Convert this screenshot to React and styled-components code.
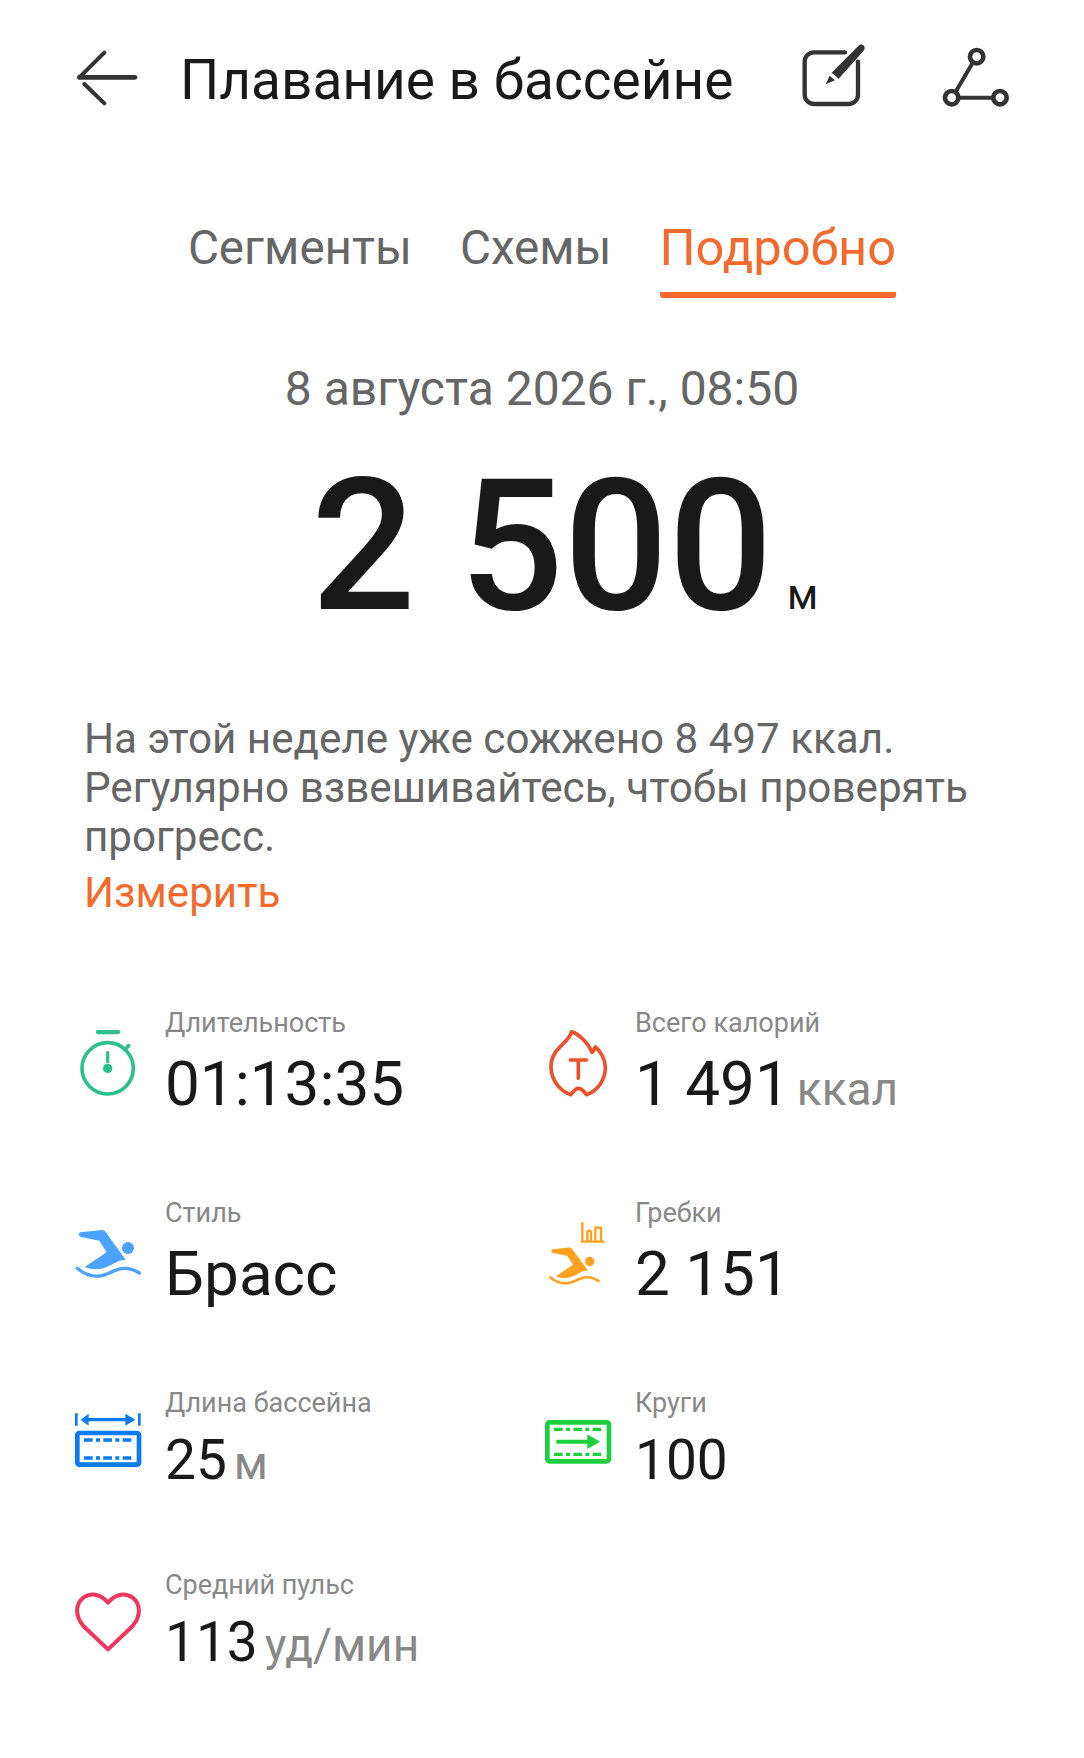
import React from 'react'
import styled, { createGlobalStyle } from 'styled-components'

const GlobalStyle = createGlobalStyle`
  html, body {
    margin: 0;
    padding: 0;
    background: #fff;
  }
`

function BackIcon() {
  return (
    <svg width="90" height="90" viewBox="0 -30 270 270">
      <path d="M28 112H195" stroke="#333" strokeWidth="14" strokeLinecap="round" />
      <path d="M28 112L103 38" fill="none" stroke="#333" strokeWidth="12" strokeLinecap="round" />
      <path d="M43 132L103 190" fill="none" stroke="#333" strokeWidth="12" strokeLinecap="round" />
    </svg>
  )
}

function EditIcon() {
  return (
    <svg width="90" height="90" viewBox="0 0 270 270">
      <path d="M165 67H72a28 28 0 0 0-28 28V194a28 28 0 0 0 28 28H176a28 28 0 0 0 28-28V95" fill="none" stroke="#333" strokeWidth="13" strokeLinecap="round" />
      <path d="M207 46C213 42 219 44 222 48C225 52 224 58 221 62L146 146L125 128Z" fill="#333" />
      <path d="M119 137L135 151L107 163Z" fill="#333" />
    </svg>
  )
}

function RouteIcon() {
  return (
    <svg width="90" height="90" viewBox="0 0 270 270">
      <g fill="none" stroke="#333">
        <circle cx="140" cy="80" r="20" strokeWidth="14" />
        <circle cx="65" cy="203" r="20" strokeWidth="14" />
        <circle cx="210" cy="203" r="20" strokeWidth="14" />
        <path d="M128 98L78 184M85 203H190" strokeWidth="12" />
      </g>
    </svg>
  )
}

function StopwatchIcon() {
  return (
    <svg width="72" height="72" viewBox="36 117 216 216">
      <path d="M114 123H174" stroke="#2cc08f" strokeWidth="13" strokeLinecap="round" />
      <circle cx="143" cy="232" r="77" fill="none" stroke="#2cc08f" strokeWidth="11" />
      <path d="M143 185V212" stroke="#2cc08f" strokeWidth="10" strokeLinecap="round" />
      <circle cx="143" cy="232" r="14" fill="#2cc08f" />
      <path d="M198 172L206 164" stroke="#2cc08f" strokeWidth="11" strokeLinecap="round" />
    </svg>
  )
}

function SwimShape({ color }) {
  return (
    <g fill={color}>
      <path d="M62 724L126 717Q133 717 137 723L197 806C175 806 160 820 140 828C115 838 95 836 74 828L140 784L118 749L64 738C54 736 54 726 62 724Z" />
      <circle cx="204" cy="771" r="18" />
      <path d="M52 832C85 860 120 860 150 845C180 830 205 825 238 846" fill="none" stroke={color} strokeWidth="10" strokeLinecap="round" />
    </g>
  )
}

function BlueSwimIcon() {
  return (
    <svg width="72" height="72" viewBox="36 687 216 216">
      <SwimShape color="#4ba3ff" />
    </svg>
  )
}

function OrangeSwimIcon() {
  return (
    <svg width="72" height="72" viewBox="36 57 216 216">
      <g transform="translate(20 -420) scale(.78)">
        <SwimShape color="#ffa01f" />
      </g>
      <path d="M157 64V122H224M172 122V92Q177 86 183 92V122M196 122V80H213V122" fill="none" stroke="#ffa01f" strokeWidth="7" />
    </svg>
  )
}

function PoolIcon() {
  return (
    <svg width="72" height="72" viewBox="36 87 216 216">
      <g stroke="#0a7bf0" fill="none">
        <path d="M49 97V134M238 97V134" strokeWidth="8" />
        <path d="M75 116H212" strokeWidth="10" />
        <rect x="52" y="156" width="185" height="95" rx="6" strokeWidth="14" />
        <path d="M72 177H217M72 231H217" strokeWidth="10" strokeDasharray="26 10 12 10" />
      </g>
      <path d="M62 116L86 98V134ZM226 116L196 98V134Z" fill="#0a7bf0" />
    </svg>
  )
}

function LapsIcon() {
  return (
    <svg width="72" height="72" viewBox="36 27 216 216">
      <g stroke="#1ccf3f" fill="none">
        <rect x="52" y="64" width="185" height="117" rx="7" strokeWidth="14" />
        <path d="M72 85H217M72 160H217" strokeWidth="10" strokeDasharray="26 10 12 10" />
        <path d="M84 122H180" strokeWidth="12" strokeLinecap="round" />
      </g>
      <path d="M172 100L210 122L172 144Z" fill="#1ccf3f" />
    </svg>
  )
}

function HeartIcon() {
  return (
    <svg width="72" height="72" viewBox="36 633 216 216">
      <path d="M144 665C120 637 90 635 70 650C45 670 45 705 70 735L144 805L218 735C243 705 243 670 218 650C198 635 168 637 144 665Z" fill="none" stroke="#f0365c" strokeWidth="12" strokeLinejoin="round" />
    </svg>
  )
}

function FlameIcon() {
  return (
    <svg width="72" height="72" viewBox="36 87 216 216">
      <path d="M125 92C122 108 104 124 88 140C70 158 62 178 63 200C64 232 84 268 122 281C130 272 136 262 146 262C156 262 162 272 170 281C206 268 227 232 226 198C225 174 212 150 196 138C192 146 190 154 186 154C178 132 150 100 125 92Z" fill="none" stroke="#ee4f2c" strokeWidth="11" strokeLinejoin="round" />
      <path d="M121 177H170M145 177V232" fill="none" stroke="#ee4f2c" strokeWidth="11" strokeLinecap="round" />
    </svg>
  )
}

function Stat({ icon, label, value, unit, small }) {
  return (
    <StatCell>
      <IconSlot>{icon}</IconSlot>
      <StatText>
        <StatLabel>{label}</StatLabel>
        <StatValue $small={small}>
          {value}
          {unit && <StatUnit>{unit}</StatUnit>}
        </StatValue>
      </StatText>
    </StatCell>
  )
}

function App() {
  return (
    <Page>
      <GlobalStyle />
      <Header>
        <BackIcon />
        <Title>Плавание в бассейне</Title>
        <HeaderActions>
          <EditIcon />
          <RouteIcon />
        </HeaderActions>
      </Header>

      <Tabs>
        <Tab>Сегменты</Tab>
        <Tab>Схемы</Tab>
        <Tab $active>Подробно</Tab>
      </Tabs>

      <DateLine>8 августа 2026 г., 08:50</DateLine>

      <Distance>
        <DistanceValue>2 500</DistanceValue>
        <DistanceUnit>м</DistanceUnit>
      </Distance>

      <Message>
        На этой неделе уже сожжено 8 497 ккал.
        <br />
        Регулярно взвешивайтесь, чтобы проверять
        <br />
        прогресс.
        <MeasureLink>Измерить</MeasureLink>
      </Message>

      <StatsGrid>
        <Stat icon={<StopwatchIcon />} label="Длительность" value="01:13:35" />
        <Stat icon={<FlameIcon />} label="Всего калорий" value="1 491" unit="ккал" />
        <Stat icon={<BlueSwimIcon />} label="Стиль" value="Брасс" />
        <Stat icon={<OrangeSwimIcon />} label="Гребки" value="2 151" />
        <Stat icon={<PoolIcon />} label="Длина бассейна" value="25" unit="м" small />
        <Stat icon={<LapsIcon />} label="Круги" value="100" small />
        <Stat icon={<HeartIcon />} label="Средний пульс" value="113" unit="уд/мин" small />
      </StatsGrid>
    </Page>
  )
}

export default App

const Page = styled.div`
  width: 1084px;
  height: 1758px;
  overflow: hidden;
  background: #fff;
  font-family: Roboto, "Noto Sans", sans-serif;
  color: #191919;
`

const Header = styled.div`
  display: flex;
  align-items: center;
  height: 90px;
  padding: 30px 64px 0 70px;
`

const Title = styled.div`
  flex: 1;
  margin-left: 20px;
  padding-top: 10px;
  font-size: 55px;
  font-weight: 400;
  white-space: nowrap;
`

const HeaderActions = styled.div`
  display: flex;
  gap: 50px;
`

const Tabs = styled.div`
  display: flex;
  justify-content: center;
  align-items: flex-end;
  gap: 48px;
  margin-top: 94px;
`

const Tab = styled.div`
  font-size: ${(p) => (p.$active ? '50.6px' : '47.6px')};
  line-height: 68px;
  padding-bottom: 10px;
  color: ${(p) => (p.$active ? '#f46a2c' : '#666')};
  border-bottom: 6px solid ${(p) => (p.$active ? '#f46a2c' : 'transparent')};
  border-radius: 3px;
`

const DateLine = styled.div`
  margin-top: 59px;
  text-align: center;
  font-size: 48px;
  line-height: 64px;
  color: #666;
`

const Distance = styled.div`
  display: flex;
  justify-content: center;
  align-items: baseline;
  margin-top: 17px;
  padding-left: 45px;
`

const DistanceValue = styled.div`
  font-size: 184px;
  line-height: 216px;
  font-weight: 500;
  word-spacing: -2px;
`

const DistanceUnit = styled.div`
  margin-left: 14px;
  font-size: 42px;
`

const Message = styled.div`
  margin-top: 60px;
  padding: 0 84px;
  font-size: 42.2px;
  line-height: 49px;
  color: #666;
`

const MeasureLink = styled.div`
  margin-top: 7px;
  color: #f46a2c;
`

const StatsGrid = styled.div`
  display: grid;
  grid-template-columns: 470px 470px;
  grid-template-rows: 190px 190px 182px auto;
  margin-top: 88px;
  padding-left: 72px;
`

const StatCell = styled.div`
  display: flex;
  align-items: flex-start;
  gap: 21px;
`

const IconSlot = styled.div`
  flex: none;
  width: 72px;
  height: 72px;
  margin-top: 25px;
`

const StatText = styled.div`
  display: flex;
  flex-direction: column;
`

const StatLabel = styled.div`
  font-size: 27px;
  line-height: 36px;
  color: #888;
`

const StatValue = styled.div`
  margin-top: ${(p) => (p.$small ? '1px' : '5px')};
  font-size: ${(p) => (p.$small ? '55px' : '62px')};
  line-height: 76px;
  white-space: nowrap;
`

const StatUnit = styled.span`
  margin-left: 7px;
  font-size: 46px;
  color: #888;
`
